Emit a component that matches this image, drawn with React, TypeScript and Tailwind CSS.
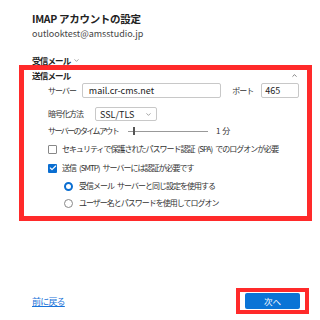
import { ChevronDown, ChevronUp, Check } from "lucide-react"

const font = { fontFamily: "'Noto Sans CJK JP', 'Noto Sans', sans-serif" }

const App = () => {
    return (
        <div className="relative w-[320px] h-[320px] bg-white text-[#222] overflow-hidden whitespace-nowrap leading-none" style={font}>
            <div className="pl-[32px] pt-[12px]">
                <div className="text-[10.5px] font-bold leading-[13px] tracking-[-0.3px]">IMAP アカウントの設定</div>
                <div className="text-[9px] text-[#444] leading-[12px] mt-[3px]">outlooktest@amsstudio.jp</div>
                <div className="flex items-center gap-[2px] text-[8.5px] font-bold mt-[14px] leading-[12px] tracking-[-0.8px]">
                    受信メール
                    <ChevronDown size={7} strokeWidth={2} className="text-[#666]" />
                </div>
            </div>

            <div className="ml-[19px] mt-[-1px] w-[293px] h-[156px] border-[5px] border-[#ff2a2a] pl-[8px] pr-[8px] text-[8px] tracking-[-1px] text-[#333]">
                <div className="flex items-center justify-between h-[10px]">
                    <span className="font-bold text-[#222] text-[8.5px] tracking-[-0.8px]">送信メール</span>
                    <ChevronUp size={7} strokeWidth={2.5} className="text-[#555] mr-[1px]" />
                </div>

                <div className="flex items-center mt-[3px] h-[15px]">
                    <span className="ml-[16px] w-[34px]">サーバー</span>
                    <div className="w-[140px] h-[15px] border border-[#c8c8c8] rounded-[2px] flex items-center px-[6px] text-[9px] tracking-normal text-[#222]">mail.cr-cms.net</div>
                    <span className="ml-[11px] w-[29px]">ポート</span>
                    <div className="w-[38px] h-[15px] border border-[#c8c8c8] rounded-[2px] flex items-center px-[3px] text-[9px] tracking-normal text-[#222]">465</div>
                </div>

                <div className="flex items-center mt-[9px] h-[14px]">
                    <span className="ml-[16px] w-[47px]">暗号化方法</span>
                    <div className="w-[62px] h-[14px] border border-[#c8c8c8] rounded-[2px] flex items-center justify-between px-[4px] text-[9px] tracking-normal text-[#222]">
                        SSL/TLS
                        <ChevronDown size={7} strokeWidth={2} className="text-[#666]" />
                    </div>
                </div>

                <div className="flex items-center mt-[3px] h-[14px]">
                    <span className="ml-[16px] w-[80px] tracking-[-1.6px]">サーバーのタイムアウト</span>
                    <div className="relative w-[80px] h-[10px] flex items-center">
                        <div className="w-full h-[1px] bg-[#999]" />
                        <div className="absolute left-[5px] top-[1px] w-[1.5px] h-[8px] bg-[#555]" />
                    </div>
                    <span className="ml-[8px] tracking-normal">1 分</span>
                </div>

                <div className="flex items-center mt-[4px] h-[14px] ml-[16px]">
                    <div className="w-[9px] h-[9px] border border-[#888] rounded-[1px] bg-white shrink-0" />
                    <span className="ml-[5px]">セキュリティで保護されたパスワード認証{"\u2002"}(SPA){"\u2002"}でのログオンが必要</span>
                </div>

                <div className="flex items-center mt-[5px] h-[14px] ml-[16px]">
                    <div className="w-[9px] h-[9px] rounded-[1px] bg-[#0a6ed1] flex items-center justify-center shrink-0">
                        <Check size={8} strokeWidth={3.5} className="text-white" />
                    </div>
                    <span className="ml-[5px]">送信{"\u2002"}(SMTP){"\u2002"}サーバーには認証が必要です</span>
                </div>

                <div className="flex items-center mt-[4px] h-[14px] ml-[32px]">
                    <div className="w-[9px] h-[9px] rounded-full border-[2.5px] border-[#0a6ed1] bg-white shrink-0" />
                    <span className="ml-[6px]">受信メール{"\u2002"}サーバーと同じ設定を使用する</span>
                </div>

                <div className="flex items-center mt-[3px] h-[14px] ml-[32px]">
                    <div className="w-[9px] h-[9px] rounded-full border border-[#888] bg-white shrink-0" />
                    <span className="ml-[6px]">ユーザー名とパスワードを使用してログオン</span>
                </div>
            </div>

            <div className="flex items-center justify-between mt-[67px] pl-[32px] pr-[11px]">
                <span className="text-[9px] text-[#1a73d9] underline tracking-[-0.8px]">前に戻る</span>
                <div className="w-[73px] h-[26px] border-[4px] border-[#ff2a2a] flex items-center justify-center">
                    <div className="w-[55px] h-[16px] bg-[#0a74d6] rounded-[2px] flex items-center justify-center text-[8.5px] text-white">次へ</div>
                </div>
            </div>
        </div>
    )
}

export default App
